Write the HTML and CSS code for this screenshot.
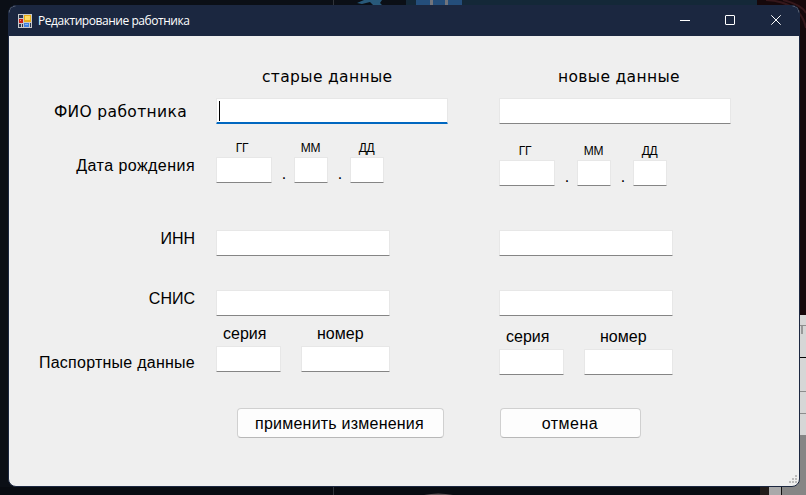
FILE: index.html
```html
<!DOCTYPE html>
<html lang="ru">
<head>
<meta charset="utf-8">
<title>Редактирование работника</title>
<link rel="stylesheet" href="styles.css">
</head>
<body>
<svg class="backdrop" width="806" height="495" viewBox="0 0 806 495" aria-hidden="true">
  <rect width="806" height="495" fill="#0b0f16"/>
  <rect x="333" width="1" height="495" fill="#30343a"/>
  <path d="M357 3L364 0H382L380 3L383 6H374L370 2L362 4Z" fill="#28597a"/>
  <rect x="406" width="351" height="6" fill="#142838"/>
  <rect x="416" width="46" height="6" fill="#244e7b"/>
  <path d="M430 0h3v6h-3zM445 0h3v6h-3z" fill="#72747c"/>
  <rect x="757" width="49" height="315" fill="#16080b"/>
  <path d="M766 0Q801 2 806 28M783 0Q802 5 806 13" fill="none" stroke="#35171b" stroke-width="2"/>
  <rect x="798" y="315" width="8" height="120" fill="#d6d6d6"/>
  <path d="M798 325h8v1h-8zM798 391h8v1h-8zM798 413h8v1h-8z" fill="#8d8d8d"/>
  <rect x="801" y="326" width="2" height="8" fill="#999"/>
  <rect x="798" y="357" width="8" height="1" fill="#050505"/>
  <rect x="782" y="435" width="24" height="60" fill="#858585"/>
  <rect x="0" y="487" width="769" height="8" fill="#080b11"/>
  <rect x="333" y="487" width="1" height="8" fill="#30343a"/>
  <path d="M424 495q14-3 29 0z" fill="#5c5053"/>
  <rect x="760" y="487" width="9" height="8" fill="#211b19"/>
  <rect x="769" y="487" width="12" height="8" fill="#a9a9aa"/>
  <rect x="781" y="487" width="1" height="8" fill="#101010"/>
</svg>
<div class="window">
  <header class="titlebar">
    <svg class="app-icon" width="14" height="14" viewBox="0 0 14 14">
      <rect width="14" height="14" fill="#c6c8cb"/>
      <path d="M1 1h4v3H1zM1 10h2v3H1zM4 10h1v3H4z" fill="#29344d"/>
      <rect x="1" y="5" width="4" height="4" fill="#c91f18"/>
      <rect x="2" y="6" width="1" height="1" fill="#ff8d78"/>
      <rect x="6" y="1" width="7" height="7" fill="#e9ad18"/>
      <rect x="7" y="2" width="5" height="4" fill="#ffdc63"/>
      <rect x="6" y="9" width="5" height="4" fill="#3f80df"/>
      <rect x="7" y="10" width="3" height="1" fill="#81b4f7"/>
      <rect x="12" y="9" width="1" height="4" fill="#29344d"/>
    </svg>
    <span class="title">Редактирование работника</span>
    <svg class="controls" width="138" height="30" viewBox="0 0 138 30" fill="none" stroke="#fff">
      <path d="M19 14.500h10"/>
      <rect x="64.500" y="9.500" width="9" height="9" rx=".5"/>
      <path d="M110.300 9.300l9.400 9.400M119.700 9.300l-9.400 9.400"/>
    </svg>
  </header>
  <main class="form">
    <div class="fields">
      <div class="labels">
        <span class="label wide">ФИО работника</span>
        <span class="label birth">Дата рождения</span>
        <span class="label inn">ИНН</span>
        <span class="label snis">СНИС</span>
        <span class="label passport-label">Паспортные данные</span>
      </div>
      <section class="column old">
        <h2 class="wide">старые данные</h2>
        <div class="input full active"><span class="caret"></span></div>
        <div class="date">
          <div class="part year"><span>ГГ</span><div class="input"></div></div>
          <span class="dot">.</span>
          <div class="part"><span>ММ</span><div class="input"></div></div>
          <span class="dot">.</span>
          <div class="part"><span>ДД</span><div class="input"></div></div>
        </div>
        <div class="input number"></div>
        <div class="input number second"></div>
        <div class="passport">
          <div class="series"><span>серия</span><div class="input"></div></div>
          <div class="num"><span>номер</span><div class="input"></div></div>
        </div>
      </section>
      <section class="column new">
        <h2 class="wide">новые данные</h2>
        <div class="input full"></div>
        <div class="date">
          <div class="part year"><span>ГГ</span><div class="input"></div></div>
          <span class="dot">.</span>
          <div class="part"><span>ММ</span><div class="input"></div></div>
          <span class="dot">.</span>
          <div class="part"><span>ДД</span><div class="input"></div></div>
        </div>
        <div class="input number"></div>
        <div class="input number second"></div>
        <div class="passport">
          <div class="series"><span>серия</span><div class="input"></div></div>
          <div class="num"><span>номер</span><div class="input"></div></div>
        </div>
      </section>
    </div>
    <div class="actions">
      <button class="apply">применить изменения</button>
      <button class="cancel">отмена</button>
    </div>
    <svg class="grip" width="9" height="9" viewBox="0 0 9 9" fill="#bcbcbc"><path d="M7 0h2v2H7zM4 3h2v2H4zM7 3h2v2H7zM1 6h2v2H1zM4 6h2v2H4zM7 6h2v2H7z"/></svg>
  </main>
</div>
</body>
</html>
```
FILE: styles.css
```css
* { box-sizing: border-box; }
body {
  margin: 0;
  width: 806px;
  height: 495px;
  overflow: hidden;
  padding: 5px 6px 8px 8px;
  font: 16px/20px "Liberation Sans", Arial, sans-serif;
  color: #000;
}
.backdrop { position: absolute; left: 0; top: 0; z-index: -1; }
.window {
  width: 792px;
  height: 482px;
  border: 1px solid #1b2740;
  border-radius: 8px;
  overflow: hidden;
  background: #efefef;
}
.titlebar {
  display: flex;
  align-items: center;
  height: 30px;
  padding-left: 9px;
  background: #1b2740;
  color: #fff;
}
.title {
  margin-left: 6px;
  font: 12px/16px "Open Sans", "Noto Sans", sans-serif;
  letter-spacing: -0.45px;
}
.controls { margin-left: auto; }
.form { position: relative; height: 450px; }
.fields { display: flex; height: 350px; }
.labels {
  display: flex;
  flex-direction: column;
  align-items: flex-end;
  width: 186px;
  padding-top: 66px;
}
.label { height: 20px; white-space: nowrap; }
.wide { font: 15.5px/20px "DejaVu Sans", sans-serif; letter-spacing: 0.35px; }
.label.wide { margin-right: 8px; }
.birth { margin-top: 34px; letter-spacing: 0.45px; }
.inn { margin-top: 53px; }
.snis { margin-top: 40px; }
.passport-label { margin-top: 44px; letter-spacing: 0.25px; }
.column { width: 232px; padding-top: 31px; }
.old { margin-left: 21px; }
.new { margin-left: 51px; }
h2 { margin: 0; height: 20px; white-space: nowrap; }
.old h2 { padding-left: 46px; }
.new h2 { padding-left: 59px; }
.input {
  height: 26px;
  border: 1px solid #e7e7e7;
  border-bottom-color: #858585;
  border-radius: 1px;
  background: #fff;
}
.full { margin-top: 11px; }
.active { border-bottom: 2px solid #0067c0; padding: 2px 0 0 2px; }
.caret { display: block; width: 1px; height: 20px; background: #000; }
.date { display: flex; align-items: flex-end; margin-top: 17px; }
.new .date { margin-top: 20px; }
.part { width: 34px; text-align: center; }
.part.year { width: 56px; }
.part span {
  display: block;
  height: 16px;
  padding-right: 1px;
  font: 12px/14px "Liberation Sans", Arial, sans-serif;
  letter-spacing: -0.3px;
}
.year span { padding-right: 4px; }
.dot { width: 22px; height: 19px; padding-left: 2px; text-align: center; }
.number { width: 174px; margin-top: 47px; }
.new .number { margin-top: 44px; }
.column .second { margin-top: 34px; }
.passport { display: flex; gap: 20px; margin-top: 8px; }
.new .passport { margin-top: 11px; }
.series { width: 65px; }
.num { width: 89px; }
.passport span { display: block; height: 22px; }
.series span { padding-left: 7px; }
.num span { padding-left: 16px; }
.actions { display: flex; gap: 56px; padding: 22px 0 0 228px; }
button {
  height: 30px;
  padding: 2px 0 0;
  border: 1px solid #d0d0d0;
  border-bottom-color: #b8b8b8;
  border-radius: 4px;
  background: #fdfdfd;
  font: inherit;
  color: #000;
}
.apply { width: 207px; padding-right: 2px; letter-spacing: 0.22px; }
.cancel { width: 141px; padding-right: 1px; letter-spacing: 0.5px; }
.grip { position: absolute; right: 2px; bottom: 2px; }
```
